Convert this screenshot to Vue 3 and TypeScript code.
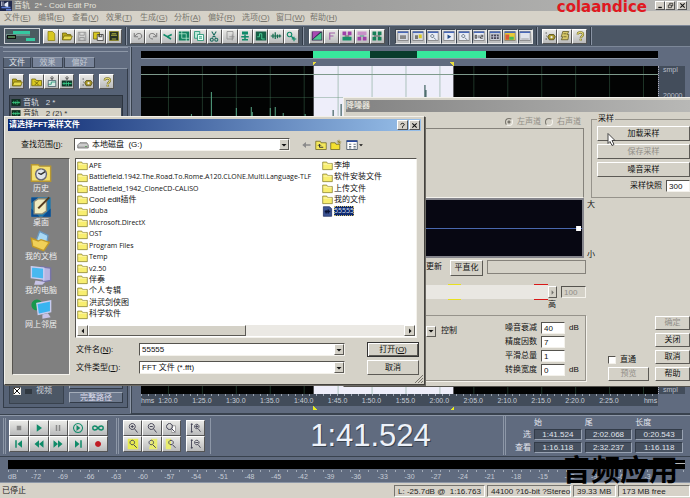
<script setup lang="ts">
import { h, ref } from 'vue'

type Shape = { d: string; f?: string; s?: string; w?: number }

const G = '#0f8a68'
const Y = '#d8c820'
const K = '#333'

const glyphs: Record<string, Shape[]> = {
  logo: [{ d: 'M0 1h16v14H0z', f: '#20284c' }, { d: 'M2 2v6M4 2v6', s: '#dde', w: 1 }, { d: 'M6 5l5-3v8L6 8z', f: '#e8ecf8' }, { d: 'M2 10h12M8 13h7', s: '#6080d8', w: 2 }],
  page: [{ d: 'M4 2h6l3 3v9H4z', f: Y, s: '#8a7c10' }],
  folder: [{ d: 'M2 4h5l1 2h5v7H2z', f: '#b8a818', s: '#6b6008' }, { d: 'M4 8h11l-2 5H2z', f: '#e8dc50', s: '#6b6008' }],
  floppy: [{ d: 'M3 3h10v11H3zM5 3v4h6V3M5 14v-4h6v4', s: '#8b8b8b' }],
  saveas: [{ d: 'M2 3h8v9H2z', f: Y, s: '#6b6008' }, { d: 'M7 6h8v8H7zM9 6v3h4V6', f: '#eee', s: K }],
  saveall: [{ d: 'M2 2h12v12H2z', f: '#263026', s: '#8b8418' }, { d: 'M5 5h6M4 7h8M5 12h6', s: '#d8d848' }],
  undo: [{ d: 'M3 4v5h5M4 8c3-5 9-4 9 0 0 3-3 4-5 4', s: '#777', w: 1.3 }],
  redo: [{ d: 'M13 4v5H8M12 8C9 3 3 4 3 8c0 3 3 4 5 4', s: '#777', w: 1.3 }],
  mix: [{ d: 'M2 6l5 3 6-3M7 9l5 3', s: G, w: 2 }],
  crop: [{ d: 'M1 2h14v12H1z', f: '#13805f' }, { d: 'M5 1v10h10M1 5h10v10', s: '#b8e8d0' }],
  copy: [{ d: 'M2 2h7v9H2z', f: '#bfe8d8', s: G }, { d: 'M6 6h8v8H6zM8 9h4M8 11h4', f: '#e8fff4', s: G }],
  cut: [{ d: 'M5 2l5 8M11 2L6 10M5 11a2 2 0 1 0 .1 0M11 11a2 2 0 1 0 .1 0', s: '#1d6d60', w: 1.4 }],
  paste: [{ d: 'M4 2h8v10H4zM7 9h7M11 6v8', s: '#888' }],
  pastemix: [{ d: 'M4 2h8v4H4z', f: G }, { d: 'M3 9h10M8 6v8M4 13h8', s: G, w: 2 }],
  wavebox: [{ d: 'M1 2h14v12H1z', f: '#155f45' }, { d: 'M3 9h3V5h3v7h4', s: '#5be8a8' }],
  wavecut: [{ d: 'M1 8h14M4 5v6M7 3v9M10 6v5M13 6v4', s: '#126b4d', w: 1.6 }],
  find: [{ d: 'M6 3a3 3 0 1 0 .1 0M8 8l3 3M9 12h6M12 9v6', s: G, w: 1.5 }],
  diag: [{ d: 'M1 2h14v12H1z', f: '#2d2448' }, { d: 'M2 13L14 3v10z', f: '#4cc890' }, { d: 'M2 12L13 2H2z', f: '#a848b0' }],
  letter: [{ d: 'M5 13V4h7M5 8h5', s: '#a060a8', w: 1.6 }],
  bars1: [{ d: 'M2 2h5v5H2zM9 2h5v5H9z', f: '#a040a8' }, { d: 'M2 9h12v5H2z', f: '#189068' }, { d: 'M5 8h6', s: K }],
  bars2: [{ d: 'M2 9h5v5H2zM9 9h5v5H9z', f: '#a040a8' }, { d: 'M2 2h12v5H2z', f: '#c890c8' }, { d: 'M5 8h6', s: G }],
  bars3: [{ d: 'M2 2h5v5H2zM9 2h5v5H9zM2 9h5v5H2zM9 9h5v5H9z', f: '#188058' }, { d: 'M4 8h8', s: K }],
  win: [{ d: 'M1 2h14v12H1z', f: '#d8dce4', s: '#777' }, { d: 'M1 2h14v2H1z', f: '#4868b8' }, { d: 'M4 7h8v5H4z', f: '#888' }],
  winyellow: [{ d: 'M1 2h14v12H1z', f: '#d8dce4', s: '#777' }, { d: 'M1 2h14v2H1z', f: '#4868b8' }, { d: 'M4 7h4v5H4z', f: '#777' }, { d: 'M9 6h4v5H9z', f: Y }],
  winplay: [{ d: 'M1 2h14v12H1z', f: '#e8ecf4', s: '#777' }, { d: 'M1 2h14v2H1z', f: '#4868b8' }, { d: 'M6 6l5 3-5 3z', f: '#234c88' }],
  winzoom: [{ d: 'M1 2h14v12H1z', f: '#e8ecf4', s: '#777' }, { d: 'M1 2h14v2H1z', f: '#4868b8' }, { d: 'M7 6a2 2 0 1 0 .1 0M9 10l3 3', s: '#456' }],
  wintime: [{ d: 'M1 2h14v12H1z', f: '#e8ecf4', s: '#777' }, { d: 'M1 2h14v2H1z', f: '#4868b8' }, { d: 'M3 7h2v4H3zM8 7v4M10 7h3v2h-3v2h3', s: '#222' }],
  wingrid: [{ d: 'M1 2h14v12H1z', f: '#c8ccd4', s: '#777' }, { d: 'M1 2h14v2H1z', f: '#4868b8' }, { d: 'M3 6h10v6H3z', f: '#445' }, { d: 'M3 9h10M6 6v6M10 6v6', s: '#ccd' }],
  wincolor: [{ d: 'M1 2h14v12H1z', f: '#e8c838', s: '#777' }, { d: 'M1 2h14v2H1z', f: '#4868b8' }, { d: 'M2 6h5v7H2z', f: '#d85838' }, { d: 'M7 9h6v4H7z', f: '#48b858' }],
  winbar: [{ d: 'M1 2h14v12H1z', f: '#e0e4ec', s: '#777' }, { d: 'M1 2h14v2H1z', f: '#4868b8' }, { d: 'M3 12h10', s: '#888' }],
  gear: [{ d: 'M2 4h2M3 8h1M2 12h2', s: K }, { d: 'M7 6h6l2 3-2 4H7L5 9z', f: '#a8982c', s: '#4b4410' }, { d: 'M10 8a1.500 1.500 0 1 0 .1 0', f: '#eee' }],
  script: [{ d: 'M5 2h8l-2 4h2l-1 7H3l2-4H3z', f: '#d8c868', s: '#5b5420' }, { d: 'M6 5h4M6 9h4', s: '#5b5420' }],
  help: [{ d: 'M5 6c0-4 7-4 7 0 0 3-3 2-3 5M9 12v2', s: '#6b6420', w: 3 }, { d: 'M5 6c0-4 7-4 7 0 0 3-3 2-3 5M9 12v2', s: '#e8dc78', w: 1.4 }],
  delpage: [{ d: 'M1 4h5l1 2h7v7H1z', f: Y, s: '#6b6008' }, { d: 'M5 7l5 5M10 7l-5 5', s: '#5b5008' }],
  insertm: [{ d: 'M8 0v4M6 2l2 3 2-3', s: K }, { d: 'M3 6h10v8H3z', f: '#d8ece4', s: '#456' }, { d: 'M3 11h4V8h6', s: G }],
  insertw: [{ d: 'M8 0v4M6 2l2 3 2-3', s: K }, { d: 'M1 6h14v8H1z', f: '#103828' }, { d: 'M2 10h12M4 8v4M7 7v6M10 8v5M13 9v2', s: '#3cd890' }],
  stop: [{ d: 'M5 5h6v6H5z', f: '#888' }],
  play: [{ d: 'M5 3l7 5-7 5z', f: G }],
  pause: [{ d: 'M5 4h2v8H5zM9 4h2v8H9z', f: '#888' }],
  playc: [{ d: 'M8 2a6 6 0 1 0 .1 0', s: G, w: 1.4 }, { d: 'M6 4l5 4-5 4z', f: G }],
  loop: [{ d: 'M8 8C5 4 1 5 1 8s4 4 7 0 7-3 7 0-4 4-7 0', s: G, w: 2 }],
  first: [{ d: 'M3 3h2v10H3zM12 3v10L6 8z', f: G }],
  rew: [{ d: 'M8 3v10L2 8zM14 3v10L8 8z', f: G }],
  fwd: [{ d: 'M2 3v10l6-5zM8 3v10l6-5z', f: G }],
  last: [{ d: 'M11 3h2v10h-2zM4 3v10l6-5z', f: G }],
  rec: [{ d: 'M8 4a4 4 0 1 0 .1 0', f: '#c01c24' }],
  zin: [{ d: 'M7 2a4 4 0 1 0 .1 0M10 9l4 5M5 6h4M7 4v4', s: '#445', w: 1.3 }],
  zout: [{ d: 'M7 2a4 4 0 1 0 .1 0M10 9l4 5M5 6h4', s: '#445', w: 1.3 }],
  zfull: [{ d: 'M9 5h5v9H9z', f: '#fff', s: '#888' }, { d: 'M6 2a4 4 0 1 0 .1 0M9 9l4 4', s: '#445', w: 1.3 }],
  zsel: [{ d: 'M1 1h14v14H1z', f: '#e8ec50' }, { d: 'M7 3a3 3 0 1 0 .1 0M9 9l4 4', s: '#445', w: 1.3 }],
  zleft: [{ d: 'M7 1h8v14H4z', f: '#e8ec70' }, { d: 'M7 3a3 3 0 1 0 .1 0M9 9l4 4', s: '#445', w: 1.3 }],
  zright: [{ d: 'M1 1h7v14H1z', f: '#e8ec70' }, { d: 'M8 3a3 3 0 1 0 .1 0M10 9l4 4', s: '#445', w: 1.3 }],
  vin: [{ d: 'M2 2v12M1 3h3M1 13h3M9 3a3 3 0 1 0 .1 0M11 9l3 4M7 6h4M9 4v4', s: '#445', w: 1.2 }],
  vout: [{ d: 'M2 2v12M1 3h3M1 13h3M9 3a3 3 0 1 0 .1 0M11 9l3 4M7 6h4', s: '#445', w: 1.2 }],
  wave: [{ d: 'M0 2h16v12H0z', f: '#0c2c1c' }, { d: 'M1 8h14M4 5v6M7 6v5M10 4v8M13 6v4', s: '#3cc880', w: 1.4 }],
  dir: [{ d: 'M1 3h6l1 2h7v9H1z', f: '#f8ee70', s: '#7b7328' }, { d: 'M2 6h12', s: '#fffbd0' }],
  file: [{ d: 'M2 1h9l3 3v11H2z', f: '#3c5494', s: '#18285c' }, { d: 'M4 8h8M6 6v5M9 5v6', s: '#0a1438', w: 2 }],
  drive: [{ d: 'M1 8l3-3h9l2 3v4H1z', f: '#b8b8b8', s: '#666' }, { d: 'M2 8h12', s: '#eee' }, { d: 'M11 10h2', s: '#2a8a2a' }],
  back: [{ d: 'M14 7H8V4L3 8l5 4V9h6z', f: '#8a8a8a' }],
  up: [{ d: 'M1 3h6l1 2h7v9H1z', f: '#f4e85c', s: '#6b6420' }, { d: 'M6 11V7M4 9l2-2 2 2M6 11h5', s: K, w: 1.3 }],
  newdir: [{ d: 'M1 5h6l1 2h5v7H1z', f: '#f4e030', s: '#6b6420' }, { d: 'M12 1v6M9 4h6M10 2l4 4', s: '#8b7c20' }],
  view: [{ d: 'M1 2h14v12H1z', f: '#fff', s: '#345' }, { d: 'M1 2h14v2H1z', f: '#2848a0' }, { d: 'M4 7h3M4 10h3M4 12h3M10 7h3M10 10h3M10 12h3', s: '#345' }],
  tri: [{ d: 'M3 6h10l-5 5z', f: '#111' }],
  tril: [{ d: 'M10 3v10L5 8z', f: '#111' }],
  trir: [{ d: 'M6 3v10l5-5z', f: '#111' }],
  close: [{ d: 'M3 3l10 10M13 3L3 13', s: '#111', w: 2.4 }],
  quest: [{ d: 'M4 6c0-4 8-4 8 0 0 3-4 2-4 5M8 12v2', s: '#111', w: 2.2 }],
  min: [{ d: 'M3 11h8v3H3z', f: '#111' }],
  restore: [{ d: 'M6 6V3h7v6h-3M3 7h7v6H3z', s: '#111', w: 1.5 }],
  history: [{ d: 'M1 2h5l1 1h8v11H1z', f: '#f4e070', s: '#b89830' }, { d: 'M8 5a4 4 0 1 0 .1 0', f: '#dfe4ea', s: '#667' }, { d: 'M8 9l3-2M8 9L6 8', s: '#333' }],
  desktop: [{ d: 'M1 1h14v14H1z', f: '#1878b0' }, { d: 'M1 9v6h6zM15 9v6H9zM1 1h5L1 5z', f: '#0c4c90' }, { d: 'M3 4l3-2h6v9l-3 2H3z', f: '#f0ecc0', s: '#887' }, { d: 'M6 9l8-8', s: '#553c20', w: 1.5 }],
  docs: [{ d: 'M7 1l6 3-1 8-8-3z', f: '#a8d8f4', s: '#6898c0' }, { d: 'M1 6l5 2 2-1 6 2-4 6-8-3z', f: '#f0d058', s: '#c09828' }],
  computer: [{ d: 'M8 2l7 1v9l-6 1z', f: '#b8b4e0', s: '#7874a8' }, { d: 'M1 2l9 1v8l-9-1z', f: '#48b8f0', s: '#c8ccf0' }, { d: 'M4 12l7 1-2 2H3z', f: '#c8c4e8' }],
  network: [{ d: 'M5 1a4 4 0 1 0 .1 0', f: '#18984c' }, { d: 'M5 4l10-2v8L6 12z', f: '#38b4f0', s: '#c8ccf0' }, { d: 'M9 12l4-1 2 3-6 1z', f: '#c8c4e8' }],
}

const Glyph = (p: { name: string }) =>
  h(
    'svg',
    { viewBox: '0 0 16 16', class: 'glyph', 'aria-hidden': 'true' },
    glyphs[p.name].map((s) => h('path', { d: s.d, fill: s.f ?? 'none', stroke: s.s ?? 'none', 'stroke-width': s.w ?? 1 })),
  )
Glyph.props = ['name']

const menus = ['文件(E)', '编辑(E)', '查看(V)', '效果(T)', '生成(G)', '分析(A)', '偏好(R)', '选项(O)', '窗口(W)', '帮助(H)']
const toolbars = [
  { id: 'g-file', items: ['page', 'folder', 'floppy', 'saveas', 'saveall'] },
  { id: 'g-edit', items: ['undo', 'redo', 'mix', 'crop', 'copy', 'cut', 'paste', 'pastemix', 'wavebox', 'wavecut', 'find'] },
  { id: 'g-view', items: ['diag', 'letter', 'bars1', 'bars2', 'bars3'] },
  { id: 'g-win', items: ['win', 'winyellow', 'winzoom', 'winplay', 'winzoom', 'wintime', 'wingrid', 'wincolor', 'winbar'] },
  { id: 'g-opt', items: ['gear', 'script', 'help'] },
]
const transport = ['stop', 'play', 'pause', 'playc', 'loop', 'first', 'rew', 'fwd', 'last', 'rec']
const zooms = ['zin', 'zout', 'zfull', 'zsel', 'zleft', 'zright']

const gridX = Array.from({ length: 15 }, (_, i) => 27 + i * 34)
const spikes = [[70, 26], [95, 42], [110, 41], [111, 46], [129, 42], [134, 41], [142, 47], [50, 48], [164, 48]]
const darkSpikes = [[192, 44], [200, 38], [284, 19], [285, 24]]
const times = Array.from({ length: 14 }, (_, i) => {
  const s = 80 + i * 5
  return `${Math.floor(s / 60)}:${String(s % 60).padStart(2, '0')}.0`
})
const levels = ['dB', ...Array.from({ length: 25 }, (_, i) => String(-72 + i * 3))]

const places = [
  ['history', '历史'],
  ['desktop', '桌面'],
  ['docs', '我的文档'],
  ['computer', '我的电脑'],
  ['network', '网上邻居'],
]
const files = [
  'APE', 'Battlefield.1942.The.Road.To.Rome.A120.CLONE.Multi.Language-TLF', 'Battlefield_1942_CloneCD-CALISO',
  'Cool edit插件', 'iduba', 'Microsoft.DirectX', 'OST', 'Program Files', 'Temp', 'v2.50', '伴奏', '个人专辑', '洪武剑侠图', '科学软件',
  '李坤', '软件安装文件', '上传文件', '我的文件', '55555',
]
const fileName = ref('55555')
const snapshots = ref('300')
const params = ref([
  { id: 'np-cut', label: '噪音衰减', value: '40', unit: 'dB' },
  { id: 'np-prec', label: '精度因数', value: '7', unit: '' },
  { id: 'np-smooth', label: '平滑总量', value: '1', unit: '' },
  { id: 'np-trans', label: '转换宽度', value: '0', unit: 'dB' },
])
const ranges = [
  ['选', '1:41.524', '2:02.068', '0:20.543'],
  ['查看', '1:16.118', '2:32.237', '1:16.118'],
]
</script>

<template>
  <div class="app">
    <header class="titlebar">
      <Glyph name="logo" />
      <span class="name">音轨&nbsp; 2* - Cool Edit Pro</span>
      <button class="cap" aria-label="最小化"><Glyph name="min" /></button>
      <button class="cap" aria-label="还原"><Glyph name="restore" /></button>
      <button class="cap last" aria-label="关闭"><Glyph name="close" /></button>
    </header>
    <nav class="menu">
      <a v-for="m in menus" :key="m" href="#">{{ m.slice(0, 3) }}<u>{{ m[3] }}</u>)</a>
    </nav>

    <div class="toolbar">
      <button class="mode" aria-label="多轨视图">
        <svg viewBox="0 0 34 14" aria-hidden="true">
          <rect x="1" y="1" width="32" height="12" fill="#4a5c60" />
          <path d="M8 2h17v3H8zM21 9h9v3h-9z" fill="#35c8a0" />
          <path d="M1 6h24" stroke="#8ba" /><path d="M2 6h9v4H2z" fill="#111" /><path d="M3 8h7" stroke="#8d8" />
        </svg>
      </button>
      <div v-for="g in toolbars" :key="g.id" class="group" :class="g.id">
        <button v-for="(n, i) in g.items" :key="i" class="tool" :aria-label="n"><Glyph :name="n" /></button>
      </div>
    </div>

    <main class="work">
      <aside class="side">
        <div class="grip"></div>
        <div class="tabs">
          <button class="tab on">文件</button><button class="tab">效果</button><button class="tab">偏好</button>
        </div>
        <div class="pane">
          <div class="row">
            <button class="tool" aria-label="打开"><Glyph name="folder" /></button>
            <span class="trio">
              <button class="tool" aria-label="关闭文件"><Glyph name="delpage" /></button>
              <button class="tool" aria-label="插入多轨"><Glyph name="insertm" /></button>
              <button class="tool" aria-label="编辑"><Glyph name="insertw" /></button>
            </span>
            <button class="tool" aria-label="选项"><Glyph name="gear" /></button>
            <button class="tool" aria-label="帮助"><Glyph name="help" /></button>
          </div>
          <ul class="tracks">
            <li><Glyph name="wave" />音轨&nbsp;&nbsp; 2 *</li>
            <li class="sel"><Glyph name="wave" />音轨&nbsp;&nbsp; 2 (2) *</li>
          </ul>
          <div class="foot">
            <label class="video"><input type="checkbox" checked /><i></i>视频</label>
            <span class="stack"><button aria-label="自动播放"></button><button>完整路径</button></span>
          </div>
        </div>
      </aside>

      <section class="stage">
        <div class="overview"><i class="view"></i></div>
        <div class="marks"><i></i></div>
        <div class="wave">
          <svg viewBox="0 0 518 328" preserveAspectRatio="none" aria-hidden="true">
            <rect width="518" height="328" fill="#020303" />
            <rect x="173" width="140" height="328" fill="#eeeefa" />
            <path v-for="x in gridX" :key="x" :d="`M${x}.5 0v328`" stroke="#4a8060" stroke-opacity=".4" />
            <path d="M0 31.500h518" stroke="#4a8060" stroke-opacity=".35" />
            <path d="M0 8.500h518" stroke="#7d9a8c" />
            <path v-for="s in spikes" :key="s[0]" :d="`M${s[0]}.5 ${s[1]}V52`" stroke="#58a888" />
            <path v-for="s in darkSpikes" :key="s[0]" :d="`M${s[0]}.5 ${s[1]}V52`" stroke="#1c4440" />
          </svg>
          <div class="scale"><span>smpl</span><span>20000</span><span class="end">smpl</span></div>
        </div>
        <div class="ruler"><span>hms</span><b v-for="t in times" :key="t">{{ t }}</b><span class="r">hms</span></div>
        <div class="marks low"><i></i></div>
      </section>
    </main>

    <section class="deck">
      <div class="keys ten"><button v-for="n in transport" :key="n" class="tool" :aria-label="n"><Glyph :name="n" /></button></div>
      <div class="keys six"><button v-for="n in zooms" :key="n" class="tool" :aria-label="n"><Glyph :name="n" /></button></div>
      <div class="keys two">
        <button class="tool" aria-label="垂直放大"><Glyph name="vin" /></button>
        <button class="tool" aria-label="垂直缩小"><Glyph name="vout" /></button>
      </div>
      <div class="clock">1:41.524</div>
      <table class="range">
        <thead><tr><th></th><th>始</th><th>尾</th><th>长度</th></tr></thead>
        <tbody>
          <tr v-for="r in ranges" :key="r[0]"><th>{{ r[0] }}</th><td v-for="(c, i) in r.slice(1)" :key="i">{{ c }}</td></tr>
        </tbody>
      </table>
    </section>

    <section class="meter">
      <div class="bar"><i></i></div>
      <div class="ticks"></div>
      <div class="levels"><span v-for="l in levels" :key="l">{{ l }}</span></div>
      <div class="caption">音频应用</div>
    </section>

    <footer class="status">
      <span class="msg">已停止</span>
      <span class="box b1">L: -25.7dB @&nbsp; 1:16.763</span>
      <span class="box b2">44100 ?16-bit ?Stereo</span>
      <span class="box b3">39.33 MB</span>
      <span class="box b4">173 MB free</span>
    </footer>

    <div class="brand">colaandice</div>

    <section class="noise" aria-label="降噪器">
      <h2>降噪器</h2>
      <div class="cols">
        <div class="left">
          <div class="radios">
            <label><input type="radio" name="ch" checked disabled />左声道</label>
            <label><input type="radio" name="ch" disabled />右声道</label>
          </div>
          <div class="profile"></div>
          <div class="curve"><svg viewBox="0 0 238 56" preserveAspectRatio="none" aria-hidden="true"><path d="M0 28.500h238" stroke="#4a68b0" /><path d="M232 26h5v5h-5z" fill="#fff" /></svg></div>
          <div class="live"><span>即时更新</span><button class="btn">平直化</button><i></i></div>
          <div class="slide">
            <span class="track"><input type="range" aria-label="降噪级别" value="100" /></span>
            <button class="btn" aria-label="增加" disabled><Glyph name="trir" /></button>
            <input class="field" value="100" aria-label="级别" disabled />
          </div>
          <div class="high">高</div>
          <div class="settings">
            <div class="ctl"><span class="arrow"><Glyph name="tri" /></span>控制</div>
            <div class="params">
              <template v-for="p in params" :key="p.id">
                <label :for="p.id">{{ p.label }}</label><input :id="p.id" v-model="p.value" class="field" /><span>{{ p.unit }}</span>
              </template>
            </div>
          </div>
        </div>
        <div class="right">
          <fieldset>
            <legend>采样</legend>
            <button class="btn">加载采样</button>
            <button class="btn" disabled>保存采样</button>
            <button class="btn">噪音采样</button>
            <label class="snap">采样快照<input v-model="snapshots" class="field" /></label>
          </fieldset>
          <div class="bigsmall"><span>大</span><span>小</span></div>
          <div class="acts">
            <div class="pre">
              <label><input type="checkbox" />直通</label>
              <button class="btn" disabled>预览</button>
            </div>
            <div class="ok">
              <button class="btn" disabled>确定</button><button class="btn">关闭</button><button class="btn">取消</button><button class="btn">帮助</button>
            </div>
          </div>
        </div>
      </div>
    </section>

    <section class="open" role="dialog" aria-label="请选择FFT采样文件">
      <header>
        <h2>请选择FFT采样文件</h2>
        <button class="cap" aria-label="帮助"><Glyph name="quest" /></button>
        <button class="cap" aria-label="关闭"><Glyph name="close" /></button>
      </header>
      <div class="look">
        <label for="lookin">查找范围(<u>I</u>):</label>
        <span class="combo"><Glyph name="drive" /><select id="lookin"><option>本地磁盘&nbsp; (G:)</option></select><span class="arrow"><Glyph name="tri" /></span></span>
        <button class="flat" aria-label="后退"><Glyph name="back" /></button>
        <button class="flat" aria-label="向上"><Glyph name="up" /></button>
        <button class="flat" aria-label="新建文件夹"><Glyph name="newdir" /></button>
        <button class="flat wide" aria-label="查看"><Glyph name="view" /><Glyph name="tri" /></button>
      </div>
      <div class="body">
        <nav class="places">
          <a v-for="p in places" :key="p[0]" href="#"><Glyph :name="p[0]" />{{ p[1] }}</a>
        </nav>
        <div class="main">
          <div class="listbox">
            <ul>
              <li v-for="f in files" :key="f" :class="{ picked: f === '55555' }">
                <Glyph :name="f === '55555' ? 'file' : 'dir'" /><span :class="{ latin: /^[\x20-\x7e]+$/.test(f) }">{{ f }}</span>
              </li>
            </ul>
            <div class="hbar">
              <button class="btn" aria-label="向左"><Glyph name="tril" /></button><span class="thumb"></span><button class="btn" aria-label="向右"><Glyph name="trir" /></button>
            </div>
          </div>
          <div class="form">
            <label for="fname">文件名(<u>N</u>):</label>
            <span class="combo"><input id="fname" v-model="fileName" /><span class="arrow"><Glyph name="tri" /></span></span>
            <button class="btn default">打开(<u>O</u>)</button>
            <label for="ftype">文件类型(<u>T</u>):</label>
            <span class="combo"><select id="ftype"><option>FFT 文件 (*.fft)</option></select><span class="arrow"><Glyph name="tri" /></span></span>
            <button class="btn">取消</button>
          </div>
        </div>
      </div>
      <svg class="sizer" viewBox="0 0 8 8" aria-hidden="true"><path d="M0 8l8-8M3 8l5-5M6 8l2-2" stroke="#77746c" /></svg>
    </section>

    <svg class="pointer" viewBox="0 0 9 14" aria-hidden="true"><path d="M1 1v10l2-2 2 4 2-1-2-4h3z" fill="#fff" stroke="#444" /></svg>
  </div>
</template>

<style>
body {
  margin: 0;
  overflow: hidden;
}
</style>

<style scoped>
* {
  box-sizing: border-box;
}
.app {
  position: relative;
  display: flex;
  flex-direction: column;
  height: 100vh;
  overflow: hidden;
  background: #606b7f;
  color: #111;
  font: 8px/10px 'Liberation Sans', 'Noto Sans CJK SC', sans-serif;
  white-space: nowrap;
}
button,
input,
select {
  margin: 0;
  padding: 0;
  border: 0;
  border-radius: 0;
  background: none;
  color: inherit;
  font: inherit;
  min-width: 0;
}
select {
  appearance: none;
}
h2 {
  margin: 0;
  font: inherit;
  font-weight: bold;
}
a {
  color: inherit;
  text-decoration: none;
}
ul {
  margin: 0;
  padding: 0;
  list-style: none;
}
input[type='checkbox'] {
  appearance: none;
  width: 8px;
  height: 8px;
  border: 1px solid;
  border-color: #55534e #f4f2ec #f4f2ec #55534e;
  background: #fff;
}
input[type='checkbox']:checked {
  background:
    linear-gradient(45deg, transparent 42%, #111 42% 58%, transparent 58%),
    linear-gradient(135deg, transparent 42%, #111 42% 58%, transparent 58%),
    #fff;
}
input[type='radio'] {
  appearance: none;
  width: 8px;
  height: 8px;
  border: 1px solid;
  border-color: #77746c #f4f2ec #f4f2ec #77746c;
  border-radius: 4px;
}
input[type='radio']:checked {
  background: radial-gradient(#77746c 0 1px, transparent 2px);
}
.glyph {
  display: block;
  width: 12px;
  height: 12px;
  flex: none;
}
.titlebar {
  display: flex;
  align-items: center;
  height: 11px;
  padding-right: 3px;
  background: linear-gradient(90deg, #828282, #b8b8b6);
  color: #e6e4dc;
}
.titlebar .name {
  flex: 1;
  margin-left: 2px;
}
.cap {
  display: flex;
  align-items: center;
  justify-content: center;
  width: 10px;
  height: 9px;
  border: 1px solid;
  border-color: #fff #555 #555 #fff;
  background: #d4d0c8;
}
.cap .glyph {
  width: 7px;
  height: 7px;
}
.cap.last {
  margin-left: 2px;
}
.menu {
  display: flex;
  align-items: center;
  height: 14px;
  padding-left: 4px;
  background: #d6d2c8;
  color: #77756e;
}
.menu a {
  width: 34px;
}
.toolbar {
  display: flex;
  align-items: center;
  height: 22px;
  padding-left: 4px;
  border-top: 1px solid #7c8798;
  border-bottom: 1px solid #7c8798;
  background: #4c5765;
}
.mode {
  width: 36px;
  height: 16px;
  border: 1px solid #ccd0d4;
}
.mode svg {
  display: block;
  width: 100%;
  height: 100%;
}
.group {
  display: flex;
  height: 18px;
  align-items: center;
  padding: 0 3px;
  border-right: 1px solid #323b48;
  box-shadow: 1px 0 #8a94a4;
}
.group .tool {
  flex: 1;
}
.g-file {
  width: 86px;
}
.g-edit {
  width: 177px;
  padding-left: 4px;
}
.g-view {
  width: 86px;
  padding-left: 6px;
}
.g-win {
  width: 148px;
  padding-left: 6px;
}
.g-opt {
  width: 54px;
  padding-left: 5px;
}
.tool {
  display: flex;
  align-items: center;
  justify-content: center;
  height: 15px;
  border: 1px solid;
  border-color: #fff #555 #555 #fff;
  background: linear-gradient(#e9e9e6, #b9babb);
}
.g-win .tool {
  border-color: #39424e #e8e8e8 #e8e8e8 #39424e;
}
.work {
  flex: 1;
  display: flex;
  min-height: 0;
}
.side {
  display: flex;
  flex-direction: column;
  width: 130px;
  padding: 0 2px 6px 3px;
}
.grip {
  height: 5px;
  border-top: 1px solid #8d97a7;
  border-bottom: 1px solid #8d97a7;
}
.tabs {
  display: flex;
  gap: 1px;
  padding-top: 5px;
}
.tab {
  height: 11px;
  width: 31px;
  border: 1px solid #3c4553;
  border-top-color: #98a2b2;
  background: #78849a;
  color: #c4cad4;
}
.tab.on {
  width: 28px;
  background: #5a6679;
  color: #e0e4ea;
}
.pane {
  flex: 1;
  display: flex;
  flex-direction: column;
  padding: 5px 4px 3px 5px;
  border: 1px solid #333c49;
  border-top-color: #8d97a7;
  background: #566276;
}
.row {
  display: flex;
  gap: 5px;
}
.row .tool {
  width: 15px;
}
.trio {
  display: flex;
}
.tracks {
  flex: 1;
  margin-top: 6px;
  padding: 1px;
  border: 1px solid #2c343f;
  background: #434c59;
  color: #d8dce0;
}
.tracks li {
  display: flex;
  align-items: center;
  gap: 2px;
  height: 11px;
}
.tracks .glyph {
  width: 10px;
  height: 9px;
}
.tracks .sel {
  background: #d6d2c6;
  color: #333;
}
.foot {
  display: flex;
  height: 26px;
  gap: 5px;
}
.video {
  display: flex;
  flex: 1;
  align-items: center;
  gap: 4px;
  padding-left: 3px;
  border: 1px solid #39424e;
  background: #4c5765;
  color: #d0d4da;
}
.video i {
  width: 7px;
  height: 5px;
  background: #303840;
}
.stack {
  display: flex;
  flex-direction: column;
  gap: 3px;
  width: 54px;
}
.stack button {
  height: 11px;
  border: 1px solid;
  border-color: #a4adba #333c49 #333c49 #a4adba;
  background: #6c788c;
  color: #dde;
  line-height: 8px;
}
.stage {
  flex: 1;
  display: flex;
  flex-direction: column;
  padding: 4px 5px 0 10px;
  border-left: 1px solid #8d97a7;
  border-bottom: 1px solid #39424e;
  box-shadow: inset 1px 0 #39424e;
}
.overview {
  height: 8px;
  margin-right: 27px;
  background: #000;
  border-bottom: 1px solid #8d97a7;
}
.overview .view {
  display: block;
  height: 7px;
  width: 173px;
  margin-left: 172px;
  background: linear-gradient(90deg, #38e89c 0 57px, #083c2c 57px 104px, #38e89c 104px);
}
.marks {
  display: flex;
  align-items: flex-end;
  height: 7px;
}
.marks i {
  width: 141px;
  height: 4px;
  margin-left: 172px;
  background:
    linear-gradient(135deg, #e8dc40 50%, transparent 50%) left / 4px 4px no-repeat,
    linear-gradient(225deg, #e8dc40 50%, transparent 50%) right / 4px 4px no-repeat;
}
.marks.low {
  align-items: flex-start;
}
.marks.low i {
  background:
    linear-gradient(45deg, #e8ec20 50%, transparent 50%) left / 4px 4px no-repeat,
    linear-gradient(315deg, #e8ec20 50%, transparent 50%) right / 4px 4px no-repeat;
}
.wave {
  flex: 1;
  display: flex;
  min-height: 0;
}
.wave svg {
  flex: 1;
  min-width: 0;
  height: 100%;
}
.scale {
  display: flex;
  flex-direction: column;
  width: 27px;
  padding-left: 4px;
  background: #434d5b;
  border-left: 1px dotted #aab;
  color: #b8bec8;
  font-size: 7px;
  line-height: 8px;
  gap: 18px;
}
.scale .end {
  margin-top: auto;
}
.ruler {
  display: flex;
  height: 12px;
  margin-right: 27px;
  background: repeating-linear-gradient(90deg, #9aa3b0 0 1px, transparent 1px 7px) top / 100% 2px no-repeat #424c5a;
  color: #c6ccd6;
  font-size: 7px;
  line-height: 13px;
}
.ruler b {
  flex: 1;
  text-align: center;
  font-weight: normal;
}
.ruler span {
  width: 10px;
}
.ruler .r {
  width: 32px;
  padding-left: 18px;
}
.deck {
  display: flex;
  align-items: center;
  height: 42px;
  padding: 0 4px 0 3px;
  border-top: 1px solid #39424e;
  box-shadow: inset 0 1px #8d97a7;
}
.keys {
  display: grid;
  grid-template-rows: 16px 16px;
  height: 36px;
  padding: 2px 5px;
  border-left: 3px double #8d97a7;
}
.keys .tool {
  height: 16px;
}
.ten {
  width: 110px;
  padding: 2px 5px 2px 3px;
  grid-template-columns: repeat(5, 1fr);
}
.six {
  width: 70px;
  padding: 2px 5px 2px 4px;
  grid-template-columns: repeat(3, 1fr);
  margin-left: 3px;
}
.two {
  width: 25px;
  padding: 2px 5px 2px 0;
  border: 0;
  border-right: 1px solid #8d97a7;
}
.clock {
  flex: 1;
  padding-left: 27px;
  color: #eef2fa;
  text-align: center;
  font-size: 31px;
  line-height: 36px;
  text-shadow: 1px 1px #39424e;
}
.range {
  width: 183px;
  height: 38px;
  border-spacing: 3px 2px;
  border-left: 3px double #8d97a7;
  line-height: 9px;
  color: #e0e4ec;
  table-layout: fixed;
}
.range th {
  padding: 0;
  font-weight: normal;
  text-align: left;
}
.range th:first-child {
  width: 22px;
  text-align: right;
}
.range td {
  padding: 0;
  border: 1px solid #323b48;
  border-right-color: #98a2b2;
  border-bottom-color: #98a2b2;
  background: #46505f;
  text-align: center;
}
.meter {
  position: relative;
  height: 27px;
  padding: 3px 5px 0 8px;
  border-top: 1px solid #39424e;
  border-bottom: 1px solid #8d97a7;
}
.bar {
  height: 9px;
  background: #000;
}
.bar i {
  display: block;
  width: 12px;
  height: 4px;
  margin-left: auto;
  border: 1px solid #bbb;
  border-width: 0 0 1px 1px;
}
.ticks {
  height: 3px;
  background: repeating-linear-gradient(90deg, #a2abb8 0 1px, transparent 1px 9px) bottom / 100% 2px no-repeat;
}
.levels {
  display: flex;
  color: #c6ccd6;
  font-size: 7px;
  line-height: 9px;
}
.levels span {
  flex: 1;
}
.levels span:first-child {
  flex: none;
  width: 23px;
}
.levels span:last-child {
  flex: none;
  width: 14px;
}
.caption {
  position: absolute;
  right: 12px;
  bottom: -1px;
  color: #000;
  font: bold 29px/30px 'Noto Sans CJK SC', sans-serif;
}
.status {
  display: flex;
  align-items: center;
  gap: 2px;
  height: 15px;
  padding-left: 2px;
  background: #d6d2c8;
  color: #222;
}
.msg {
  flex: 1;
}
.box {
  height: 12px;
  padding-left: 3px;
  line-height: 11px;
  border: 1px solid;
  border-color: #77756f #fff #fff #77756f;
}
.b1 {
  width: 91px;
}
.b2 {
  width: 84px;
}
.b3 {
  width: 43px;
}
.b4 {
  width: 72px;
}
.brand {
  position: absolute;
  top: 0;
  right: 43px;
  color: #e01820;
  font: bold 15px/14px 'DejaVu Sans', sans-serif;
}
.btn {
  display: flex;
  align-items: center;
  justify-content: center;
  height: 14px;
  border: 1px solid;
  border-color: #fff #5c5a55 #5c5a55 #fff;
  background: #d4d1c7;
}
.btn:disabled {
  color: #918e87;
}
.field {
  width: 24px;
  height: 12px;
  padding-left: 2px;
  border: 1px solid;
  border-color: #55534e #f4f2ec #f4f2ec #55534e;
  background: #fff;
}
.field:disabled {
  background: #d4d1c7;
  color: #918e87;
}
.arrow {
  display: flex;
  align-items: center;
  justify-content: center;
  width: 10px;
  height: 11px;
  border: 1px solid;
  border-color: #fff #5c5a55 #5c5a55 #fff;
  background: #d4d1c7;
}
.arrow .glyph {
  width: 8px;
  height: 8px;
}
.noise {
  position: absolute;
  top: 97px;
  left: 343px;
  right: 0;
  padding: 2px 0 5px 2px;
  border-top: 1px solid #f2f0ea;
  border-left: 1px solid #f2f0ea;
  border-bottom: 1px solid #55534e;
  background: #d5d2c8;
}
.noise h2 {
  height: 12px;
  background: linear-gradient(90deg, #828282, #b8b8b6);
  color: #e2e0d8;
  line-height: 12px;
}
.cols {
  display: flex;
  gap: 5px;
}
.left {
  width: 240px;
  padding-top: 4px;
}
.radios {
  display: flex;
  justify-content: flex-end;
  gap: 4px;
  height: 12px;
  padding-right: 5px;
  color: #918e87;
}
.radios label,
.pre label {
  display: flex;
  align-items: center;
  gap: 4px;
}
.profile {
  height: 70px;
  margin-right: 2px;
  border: 1px solid #85827b;
  border-bottom-color: #f4f2ec;
}
.curve {
  height: 60px;
  margin-right: 2px;
  border: 2px solid #85858c;
  background: #070712;
}
.curve svg {
  display: block;
  width: 100%;
  height: 100%;
}
.live {
  display: flex;
  gap: 4px;
  justify-content: flex-end;
  margin-top: 2px;
  height: 16px;
}
.live span {
  padding: 2px 4px 0 0;
}
.live .btn {
  width: 33px;
  height: 16px;
}
.live i {
  width: 99px;
  height: 14px;
  border: 1px solid #85827b;
}
.slide {
  display: flex;
  height: 16px;
  margin-top: 8px;
  align-items: center;
}
.track {
  flex: 1;
  height: 16px;
  padding: 1px 0;
  background:
    linear-gradient(#e8e020, #e8e020) 102px 0 / 13px 16px no-repeat,
    linear-gradient(#d81818, #d81818) right / 14px 16px no-repeat;
}
.track input {
  appearance: none;
  display: block;
  width: 100%;
  height: 14px;
  background: #e9e7e2;
}
.track input::-webkit-slider-thumb {
  appearance: none;
  width: 0;
}
.slide .btn {
  width: 9px;
  height: 12px;
}
.slide .glyph {
  width: 7px;
  height: 7px;
  opacity: 0.5;
}
.slide .field {
  width: 25px;
  margin-left: 4px;
}
.high {
  padding-left: 202px;
  height: 14px;
}
.settings {
  display: flex;
  justify-content: space-between;
  height: 66px;
  margin-top: 1px;
  padding: 5px 6px 0 70px;
  border: 1px solid #96938b;
  box-shadow: 1px 1px #f4f2ec;
}
.ctl {
  display: flex;
  align-items: center;
  gap: 5px;
  height: 20px;
  padding-left: 9px;
}
.params {
  display: grid;
  grid-template-columns: 32px 24px 10px;
  grid-auto-rows: 14px;
  column-gap: 4px;
  align-items: center;
}
.right {
  flex: 1;
  display: flex;
  flex-direction: column;
}
fieldset {
  display: flex;
  flex-direction: column;
  gap: 3px;
  height: 84px;
  margin: 2px 0 0;
  padding: 2px 0 0 5px;
  border: 1px solid #96938b;
  border-right: 0;
  min-width: 0;
}
legend {
  padding: 0 1px;
}
fieldset .btn {
  width: 100%;
  height: 15px;
}
.snap {
  display: flex;
  align-items: center;
  justify-content: flex-end;
  gap: 4px;
}
.bigsmall {
  display: flex;
  flex-direction: column;
  justify-content: space-between;
  height: 60px;
  margin-top: 2px;
  margin-left: -4px;
}
.acts {
  display: flex;
  justify-content: flex-end;
  gap: 6px;
  margin-top: auto;
}
.pre {
  display: flex;
  flex-direction: column;
  justify-content: flex-end;
  gap: 2px;
  width: 41px;
}
.ok {
  display: flex;
  flex-direction: column;
  gap: 3px;
  width: 35px;
}
.open {
  position: absolute;
  top: 116px;
  left: 4px;
  width: 421px;
  padding: 2px 3px 9px;
  border: 1px solid;
  border-color: #f2f0ea #44423e #44423e #f2f0ea;
  box-shadow: 1px 1px #6c6a64;
  background: #d5d2c8;
}
.open header {
  display: flex;
  align-items: center;
  gap: 1px;
  height: 12px;
  padding-right: 1px;
  background: linear-gradient(90deg, #0c2870, #98c0ea);
  color: #fff;
}
.open h2 {
  flex: 1;
  padding-left: 1px;
}
.open .cap {
  width: 11px;
  height: 10px;
}
.sizer {
  position: absolute;
  right: 1px;
  bottom: 1px;
  width: 8px;
  height: 8px;
}
.look {
  display: flex;
  align-items: center;
  height: 27px;
  padding-left: 13px;
}
.look label {
  width: 53px;
}
.look .combo {
  width: 216px;
  margin-right: 10px;
}
.combo {
  display: flex;
  align-items: center;
  height: 13px;
  padding-left: 2px;
  border: 1px solid;
  border-color: #55534e #f4f2ec #f4f2ec #55534e;
  background: #fff;
}
.combo input,
.combo select {
  flex: 1;
  height: 11px;
}
.look .combo select {
  padding-left: 3px;
}
.flat {
  width: 15px;
}
.flat.wide {
  display: flex;
  margin-left: 1px;
}
.flat.wide .glyph:last-child {
  width: 6px;
}
.body {
  display: flex;
  gap: 5px;
  padding-left: 4px;
}
.places {
  display: flex;
  flex-direction: column;
  gap: 2px;
  width: 58px;
  height: 217px;
  padding-top: 3px;
  border: 1px solid #55534e;
  border-right-color: #f4f2ec;
  border-bottom-color: #f4f2ec;
  background: #808080;
  color: #eee;
  text-align: center;
}
.places .glyph {
  width: 22px;
  height: 22px;
  margin: 0 auto;
}
.main {
  flex: 1;
}
.listbox {
  display: flex;
  flex-direction: column;
  height: 180px;
  margin-right: 4px;
  padding: 1px;
  border: 1px solid;
  border-color: #55534e #f4f2ec #f4f2ec #55534e;
  background: #fff;
}
.listbox ul {
  display: grid;
  flex: none;
  height: 160px;
  grid-template-rows: repeat(14, 1fr);
  grid-template-columns: 245px 1fr;
  grid-auto-flow: column;
}
.listbox li {
  display: flex;
  align-items: center;
  gap: 1px;
  min-height: 0;
}
.listbox .glyph {
  width: 11px;
  height: 11px;
}
.latin {
  font-family: 'Open Sans', sans-serif;
  font-size: 7px;
}
.picked span {
  background: #0f2a70;
  color: #d8e0f0;
  outline: 1px dotted #c8b868;
  outline-offset: -1px;
}
.hbar {
  display: flex;
  height: 11px;
  margin-top: auto;
  background: #ebe9e4;
}
.hbar .btn {
  width: 11px;
  height: 11px;
}
.hbar .glyph {
  width: 8px;
  height: 8px;
}
.thumb {
  width: 158px;
  margin-right: auto;
  border: 1px solid;
  border-color: #fff #5c5a55 #5c5a55 #fff;
  background: #d4d1c7;
}
.form {
  display: grid;
  grid-template-columns: 63px 206px 22px 52px;
  grid-auto-rows: 15px;
  row-gap: 3px;
  align-items: center;
  justify-content: start;
  padding: 4px 0 0 1px;
}
.form .btn {
  grid-column: 4;
  height: 15px;
}
.default {
  border-color: #333;
  box-shadow: inset 1px 1px #fff, inset -1px -1px #5c5a55;
}
.pointer {
  position: absolute;
  top: 132px;
  left: 607px;
  width: 9px;
  height: 15px;
}
</style>
